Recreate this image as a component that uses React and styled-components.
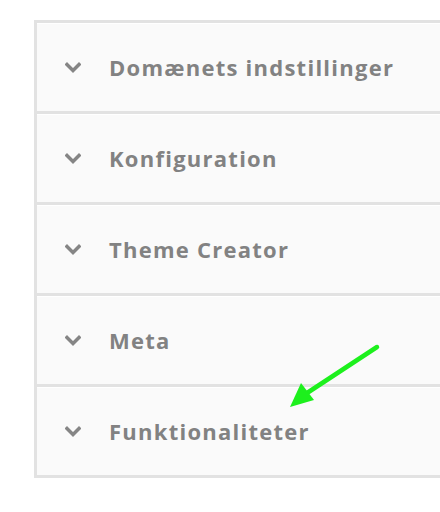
import React from 'react';
import styled, { createGlobalStyle } from 'styled-components';

const Global = createGlobalStyle`
  body {
    margin: 0;
    background: #ffffff;
    font-family: "Open Sans", "Liberation Sans", sans-serif;
  }
`;

const Page = styled.div`
  position: relative;
  width: 440px;
  height: 512px;
  overflow: hidden;
  padding: 20px 0 0 34px;
  box-sizing: border-box;
`;

const Panel = styled.div`
  width: 440px;
  border: 3px solid #e2e2e2;
  border-right: none;
  background: #fafafa;
  display: flex;
  flex-direction: column;
`;

const Row = styled.div`
  height: 88px;
  display: flex;
  align-items: center;
  gap: 28px;
  padding-left: 28px;
  border-bottom: ${p => (p.$last ? 'none' : '3px solid #e2e2e2')};
  box-shadow: inset 0 1px 0 #ffffff;
`;

const Title = styled.span`
  font-family: "Open Sans", "Liberation Sans", sans-serif;
  font-weight: 700;
  font-size: 22px;
  letter-spacing: 1.25px;
  color: #828282;
`;

const Arrow = styled.svg`
  position: absolute;
  left: 280px;
  top: 338px;
`;

const Chevron = () => (
  <svg width="16" height="11" viewBox="0 0 16 11">
    <path d="M2 2.5 L8 8.5 L14 2.5" fill="none" stroke="#858585" strokeWidth="3.4" strokeLinecap="square" />
  </svg>
);

const items = [
  'Domænets indstillinger',
  'Konfiguration',
  'Theme Creator',
  'Meta',
  'Funktionaliteter',
];

export default function App() {
  return (
    <>
      <Global />
      <Page>
        <Panel>
          {items.map((t, i) => (
            <Row key={t} $last={i === items.length - 1}>
              <Chevron />
              <Title>{t}</Title>
            </Row>
          ))}
        </Panel>
        <Arrow width="110" height="80" viewBox="0 0 110 80">
          <line x1="97" y1="9" x2="24" y2="57" stroke="#1df01d" strokeWidth="4.5" strokeLinecap="round" />
          <polygon points="10,69 21,45 34,62" fill="#1df01d" />
        </Arrow>
      </Page>
    </>
  );
}
